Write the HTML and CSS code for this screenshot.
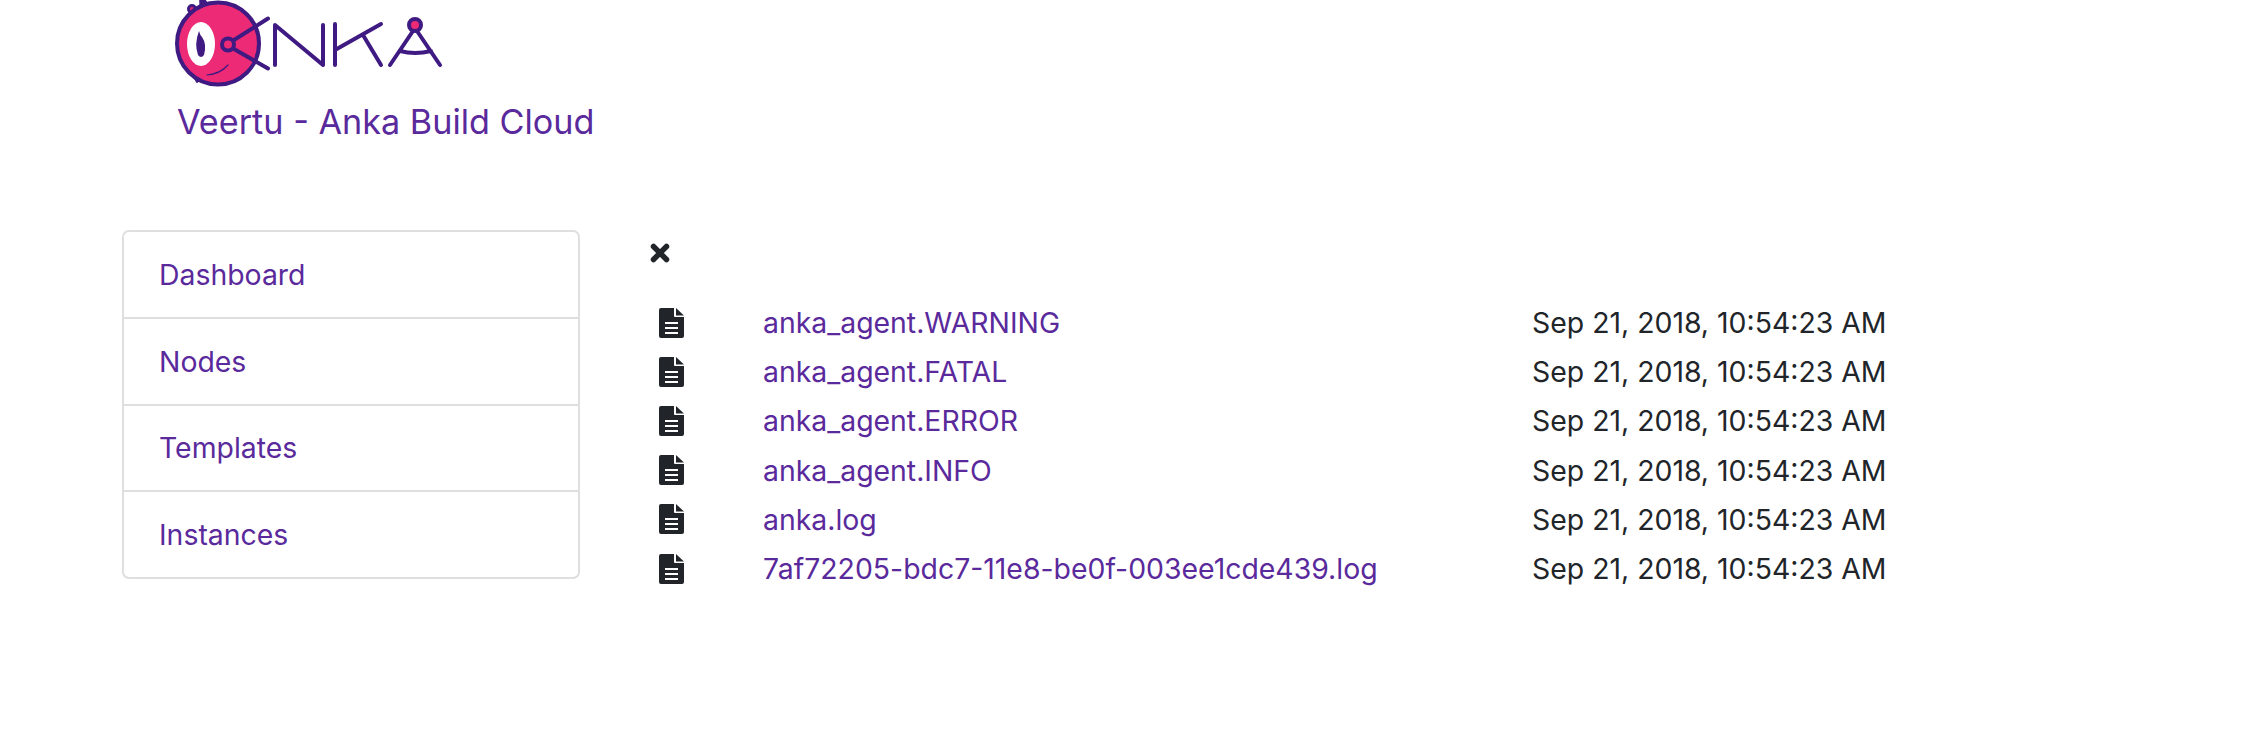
FILE: index.html
```html
<!DOCTYPE html>
<html lang="en">

<head>
  <title>Veertu - Anka Build Cloud</title>
  <meta charset="utf-8">
  <link rel="stylesheet" href="styles.css">
</head>

<body>
  <header class="brand">
    <svg class="logo" viewBox="0 0 300 90" width="300" height="90">
      <g fill="none" stroke="#3f1a82" stroke-width="4" stroke-linecap="round" stroke-linejoin="round">
        <circle cx="32" cy="9" r="3.500" fill="#ec2a75" stroke-width="3" />
        <path d="M41 -3 L53 13 L42 15 Z" fill="#fff" />
        <path d="M34 76 L41 79 L37 82 Z" fill="#fff" stroke-width="2" />
        <circle cx="58" cy="43.500" r="41" fill="#ec2a75" />
        <ellipse cx="41" cy="44" rx="14" ry="22" fill="#fff" stroke="none" />
        <path d="M39 31 Q34 44 38 55 Q41 59 44 55 Q47 44 42 37 Q40 35 39 31 Z" fill="#3f1a82" stroke="none" />
        <path d="M47 75 Q60 74 68 65" stroke-width="1.200" />
        <path d="M74 40 L108 18.500 M74 49 L108 68.500" />
        <circle cx="68" cy="44.500" r="6" fill="#ec2a75" />
        <path d="M115 65 L115 25 L163 65 L163 25" />
        <path d="M175 24 L175 65 M175 50 L221 24 M203 35 L221 65" />
        <path d="M230 65 L253 31 M280 65 L257 31 M240 51 Q255 55 271 51" />
        <circle cx="255" cy="25" r="6" fill="#ec2a75" />
      </g>
    </svg>
    <h1 class="brand-title">Veertu - Anka Build Cloud</h1>
  </header>

  <main class="layout">
    <nav class="side-menu">
      <a href="#">Dashboard</a>
      <a href="#">Nodes</a>
      <a href="#">Templates</a>
      <a href="#">Instances</a>
    </nav>

    <section class="logs">
      <svg class="close-icon" viewBox="0 0 20 20" width="20" height="20">
        <path d="M3.500 3.500 L16.500 16.500 M16.500 3.500 L3.500 16.500" stroke="#212529" stroke-width="5.500" stroke-linecap="round" />
      </svg>

      <div class="log-row">
        <svg class="file-icon" viewBox="0 0 26 30" width="26" height="30"><use href="#file" /></svg>
        <a href="#">anka_agent.WARNING</a>
        <span>Sep 21, 2018, 10:54:23 AM</span>
      </div>
      <div class="log-row">
        <svg class="file-icon" viewBox="0 0 26 30" width="26" height="30"><use href="#file" /></svg>
        <a href="#">anka_agent.FATAL</a>
        <span>Sep 21, 2018, 10:54:23 AM</span>
      </div>
      <div class="log-row">
        <svg class="file-icon" viewBox="0 0 26 30" width="26" height="30"><use href="#file" /></svg>
        <a href="#">anka_agent.ERROR</a>
        <span>Sep 21, 2018, 10:54:23 AM</span>
      </div>
      <div class="log-row">
        <svg class="file-icon" viewBox="0 0 26 30" width="26" height="30"><use href="#file" /></svg>
        <a href="#">anka_agent.INFO</a>
        <span>Sep 21, 2018, 10:54:23 AM</span>
      </div>
      <div class="log-row">
        <svg class="file-icon" viewBox="0 0 26 30" width="26" height="30"><use href="#file" /></svg>
        <a href="#">anka.log</a>
        <span>Sep 21, 2018, 10:54:23 AM</span>
      </div>
      <div class="log-row">
        <svg class="file-icon" viewBox="0 0 26 30" width="26" height="30"><use href="#file" /></svg>
        <a href="#">7af72205-bdc7-11e8-be0f-003ee1cde439.log</a>
        <span>Sep 21, 2018, 10:54:23 AM</span>
      </div>
    </section>
  </main>

  <svg class="icon-defs" width="0" height="0">
    <symbol id="file" viewBox="0 0 26 30">
      <path fill="#212529" fill-rule="evenodd" d="M2 0 H15 V8 Q15 9 16 9 H25 V28 Q25 30 23 30 H2 Q0 30 0 28 V2 Q0 0 2 0 Z M6 14 V16 H19 V14 Z M6 19 V21 H19 V19 Z M6 24 V26 H19 V24 Z" />
      <path fill="#212529" d="M17 0 L25 7.500 H17 Z" />
    </symbol>
  </svg>
</body>

</html>
```

FILE: styles.css
```css
* {
  box-sizing: border-box;
}

body {
  margin: 0;
  font-family: "Inter", "Liberation Sans", sans-serif;
  font-size: 28.400px;
  color: #212529;
  background-color: #ffffff;
}

a {
  color: #5a2a9c;
  text-decoration: none;
}

.brand {
  height: 230px;
  padding-left: 160px;
}

.logo {
  display: block;
}

.brand-title {
  margin: 10px 0 0 17px;
  font-size: 34.200px;
  font-weight: 400;
  line-height: 44px;
  color: #5a2a9c;
}

.layout {
  display: flex;
  padding-left: 122px;
}

.side-menu {
  display: flex;
  flex-direction: column;
  width: 458px;
  height: 349px;
  border: 2px solid #dfdfdf;
  border-radius: 7px;
}

.side-menu a {
  flex: 1;
  display: flex;
  align-items: center;
  padding-left: 35px;
  border-bottom: 2px solid #dfdfdf;
}

.side-menu a:last-child {
  border-bottom: none;
}

.logs {
  margin-left: 70px;
  width: 1300px;
}

.close-icon {
  display: block;
  margin: 13px 0 35px;
}

.log-row {
  display: grid;
  grid-template-columns: 113px 769px auto;
  align-items: center;
  height: 49.200px;
}

.file-icon {
  margin-left: 9px;
}

.icon-defs {
  position: absolute;
}
```
